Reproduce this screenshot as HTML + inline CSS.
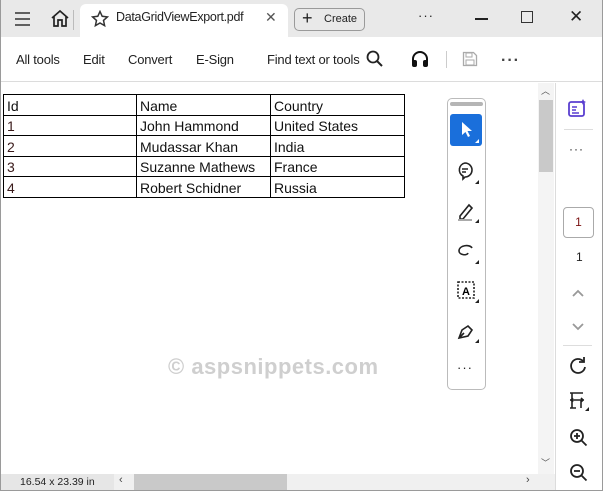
<!DOCTYPE html>
<html><head><style>
*{margin:0;padding:0;box-sizing:border-box}
body{width:603px;height:491px;overflow:hidden;background:#fff;font-family:"Liberation Sans",Arial,sans-serif;position:relative;color:#222}
.abs{position:absolute}
.win{position:absolute;left:0;top:0;width:603px;height:491px;border:1px solid #9a9a9a;border-top:none}
.title{left:0;top:0;width:603px;height:37px;background:#e9e9e9}
.tab{left:80px;top:4px;width:208px;height:33px;background:#fff;border-radius:6px 6px 0 0}
.tb{left:0;top:37px;width:603px;height:45px;background:#fff;border-bottom:1px solid #dcdcdc;font-size:13px;color:#222}
.tb span{position:absolute;top:15px;letter-spacing:-0.2px}
table{position:absolute;left:3px;top:94px;border-collapse:collapse;font-size:14px;color:#111}
td{border:1px solid #000;height:20.5px;padding:0 3px;line-height:18px;vertical-align:bottom}
td:first-child{color:#3a1a1a}
</style></head><body>
<div class="abs title"></div>
<div class="abs tab"></div>
<svg class="abs" style="left:14px;top:11px" width="18" height="16"><path d="M1 2h15M1 8h15M1 14h15" stroke="#333" stroke-width="1.6"/></svg>
<svg class="abs" style="left:50px;top:9px" width="20" height="19"><path d="M2 9L10 2l8 7M4 7v10h4v-6h4v6h4V7" fill="none" stroke="#222" stroke-width="1.7"/></svg>
<div class="abs" style="left:73px;top:10px;width:1px;height:20px;background:#bbb"></div>
<svg class="abs" style="left:91px;top:10px" width="18" height="18"><path d="M9 1.5l2.2 4.8 5.2.6-3.9 3.5 1.1 5.2L9 13l-4.6 2.6 1.1-5.2L1.6 6.9l5.2-.6z" fill="none" stroke="#333" stroke-width="1.5"/></svg>
<div class="abs" style="left:116px;top:10px;font-size:12.5px;letter-spacing:-0.3px;color:#222">DataGridViewExport.pdf</div>
<div class="abs" style="left:265px;top:9px;font-size:14px;color:#555">✕</div>
<div class="abs" style="left:294px;top:8px;width:71px;height:23px;border:1px solid #9a9a9a;border-radius:5px;font-size:11px;color:#222;line-height:21px;padding-left:29px">Create</div>
<div class="abs" style="left:302px;top:8px;font-size:18px;line-height:21px">+</div>
<div class="abs" style="left:418px;top:8px;font-size:13px;letter-spacing:1px">···</div>
<div class="abs" style="left:475px;top:18px;width:13px;height:2px;background:#222"></div>
<div class="abs" style="left:521px;top:11px;width:12px;height:12px;border:1.5px solid #333"></div>
<div class="abs" style="left:569px;top:7px;font-size:17px;color:#222">✕</div>
<div class="abs tb">
<span style="left:16px">All tools</span><span style="left:83px">Edit</span><span style="left:128px">Convert</span><span style="left:196px">E-Sign</span><span style="left:267px">Find text or tools</span>
</div>
<svg class="abs" style="left:366px;top:50px" width="18" height="18"><circle cx="7" cy="7" r="5.5" fill="none" stroke="#222" stroke-width="1.8"/><path d="M11 11l5 5" stroke="#222" stroke-width="2"/></svg>
<svg class="abs" style="left:410px;top:50px" width="20" height="18"><path d="M3 12V9a7 7 0 0114 0v3" fill="none" stroke="#111" stroke-width="2"/><rect x="2" y="10" width="5" height="7" rx="2" fill="#111"/><rect x="13" y="10" width="5" height="7" rx="2" fill="#111"/></svg>
<div class="abs" style="left:446px;top:51px;width:1px;height:17px;background:#ccc"></div>
<svg class="abs" style="left:462px;top:51px" width="16" height="16"><path d="M1.5 1.5h10l3 3v10h-13z" fill="none" stroke="#aaa" stroke-width="1.3"/><rect x="4" y="9" width="8" height="5" fill="none" stroke="#aaa"/><rect x="4" y="2" width="6" height="4" fill="none" stroke="#aaa"/></svg>
<div class="abs" style="left:501px;top:52px;font-size:16px;color:#444;letter-spacing:1px;font-weight:bold">···</div>

<table>
<tr><td style="width:133px;color:#111">Id</td><td style="width:134px">Name</td><td style="width:134px">Country</td></tr>
<tr><td>1</td><td>John Hammond</td><td>United States</td></tr>
<tr><td>2</td><td>Mudassar Khan</td><td>India</td></tr>
<tr><td>3</td><td>Suzanne Mathews</td><td>France</td></tr>
<tr><td>4</td><td>Robert Schidner</td><td>Russia</td></tr>
</table>
<div class="abs" style="left:168px;top:354px;font-size:22px;font-weight:bold;color:#cfcfcf;letter-spacing:0.5px">© aspsnippets.com</div>

<div class="abs" style="left:447px;top:98px;width:39px;height:292px;border:1px solid #bbb;border-radius:5px;background:#fff"></div>
<div class="abs" style="left:450px;top:102px;width:33px;height:4px;background:#b5b5b5;border-radius:2px"></div>
<div class="abs" style="left:450px;top:114px;width:32px;height:32px;background:#1a6fdb;border-radius:3px"></div>
<svg class="abs" style="left:450px;top:114px" width="32" height="32"><path d="M12 8v13l3.5-3 2.5 5 2-1-2.5-5H22z" fill="#fff"/><path d="M29 29v-4l-4 4z" fill="#fff"/></svg>
<svg class="abs" style="left:455px;top:160px" width="26" height="26"><path d="M10 3a7 7 0 110 14l-2 2v-3a7 7 0 012-13z" fill="none" stroke="#222" stroke-width="1.6"/><path d="M7 9h6M7 12h4" stroke="#222" stroke-width="1.5"/><path d="M24 24v-4l-4 4z" fill="#222"/></svg>
<svg class="abs" style="left:455px;top:199px" width="26" height="26"><path d="M5 17l9-11 3 3-9 11H5z" fill="none" stroke="#222" stroke-width="1.6"/><path d="M3 21h14" stroke="#aaa" stroke-width="2"/><path d="M24 24v-4l-4 4z" fill="#222"/></svg>
<svg class="abs" style="left:455px;top:240px" width="26" height="26"><path d="M17 8c-2-4-13-3-13 3 0 4 8 5 9 2" fill="none" stroke="#222" stroke-width="1.6"/><path d="M24 24v-4l-4 4z" fill="#222"/></svg>
<svg class="abs" style="left:455px;top:279px" width="26" height="26"><rect x="3" y="3" width="16" height="16" fill="none" stroke="#222" stroke-width="1.6" stroke-dasharray="2 1.5"/><text x="7" y="16" font-size="11" font-weight="bold" font-family="Liberation Sans">A</text><path d="M24 24v-4l-4 4z" fill="#222"/></svg>
<svg class="abs" style="left:455px;top:319px" width="26" height="26"><path d="M4 19l3-8 6-4 4 4-4 6z M4 19l5-5" fill="none" stroke="#222" stroke-width="1.6"/><path d="M24 24v-4l-4 4z" fill="#222"/></svg>
<div class="abs" style="left:457px;top:360px;font-size:13px;letter-spacing:1px">···</div>

<div class="abs" style="left:538px;top:83px;width:16px;height:391px;background:#f4f4f4"></div>
<div class="abs" style="left:539px;top:100px;width:14px;height:72px;background:#c9c9c9"></div>
<div class="abs" style="left:541px;top:84px;font-size:9px;color:#555">︿</div>
<div class="abs" style="left:541px;top:456px;font-size:9px;color:#555">﹀</div>
<div class="abs" style="left:555px;top:83px;width:1px;height:408px;background:#dcdcdc"></div>

<svg class="abs" style="left:568px;top:98px" width="20" height="20"><rect x="1" y="4" width="15" height="14" rx="2" fill="#fff" stroke="#5a3fd0" stroke-width="1.8"/><path d="M4 9h5M4 12h4M4 15h7" stroke="#5a3fd0" stroke-width="1.5"/><path d="M15 1l1 2 2 1-2 1-1 2-1-2-2-1 2-1z" fill="#5a3fd0"/></svg>
<div class="abs" style="left:564px;top:129px;width:29px;height:1px;background:#ddd"></div>
<div class="abs" style="left:569px;top:142px;font-size:12px;letter-spacing:1px">···</div>
<div class="abs" style="left:563px;top:207px;width:31px;height:31px;border:1px solid #aaa;border-radius:4px;text-align:center;line-height:29px;font-size:12px;color:#7a1010">1</div>
<div class="abs" style="left:576px;top:250px;font-size:12px">1</div>
<svg class="abs" style="left:572px;top:289px" width="12" height="10"><path d="M1 7l5-5 5 5" fill="none" stroke="#999" stroke-width="1.8"/></svg>
<svg class="abs" style="left:572px;top:322px" width="12" height="10"><path d="M1 2l5 5 5-5" fill="none" stroke="#999" stroke-width="1.8"/></svg>
<div class="abs" style="left:563px;top:345px;width:29px;height:1px;background:#ddd"></div>
<svg class="abs" style="left:568px;top:356px" width="20" height="20"><path d="M15 5a7 7 0 10 2 6" fill="none" stroke="#222" stroke-width="1.8"/><path d="M16 1v5h-5" fill="none" stroke="#222" stroke-width="1.8"/></svg>
<svg class="abs" style="left:568px;top:390px" width="22" height="22"><path d="M2 3h13M2 18h6M4 3v15M13 18v-8M2 10h14M5 8l-2 2 2 2M13 8l2 2-2 2" fill="none" stroke="#222" stroke-width="1.6"/><path d="M21 21v-4l-4 4z" fill="#222"/></svg>
<svg class="abs" style="left:569px;top:428px" width="20" height="20"><circle cx="8" cy="8" r="6" fill="none" stroke="#222" stroke-width="1.8"/><path d="M5 8h6M8 5v6M12.5 12.5l5 5" stroke="#222" stroke-width="1.8"/></svg>
<svg class="abs" style="left:569px;top:463px" width="20" height="20"><circle cx="8" cy="8" r="6" fill="none" stroke="#222" stroke-width="1.8"/><path d="M5 8h6M12.5 12.5l5 5" stroke="#222" stroke-width="1.8"/></svg>

<div class="abs" style="left:0;top:474px;width:555px;height:16px;background:#f0f0f0"></div>
<div class="abs" style="left:0;top:474px;width:114px;height:16px;background:#e6e6e6"></div>
<div class="abs" style="left:20px;top:476px;font-size:10.5px;color:#222">16.54 x 23.39 in</div>
<div class="abs" style="left:119px;top:474px;font-size:11px;color:#444">‹</div>
<div class="abs" style="left:134px;top:474px;width:153px;height:16px;background:#c9c9c9"></div>
<div class="abs" style="left:526px;top:474px;font-size:11px;color:#444">›</div>
<div class="win"></div>
</body></html>
